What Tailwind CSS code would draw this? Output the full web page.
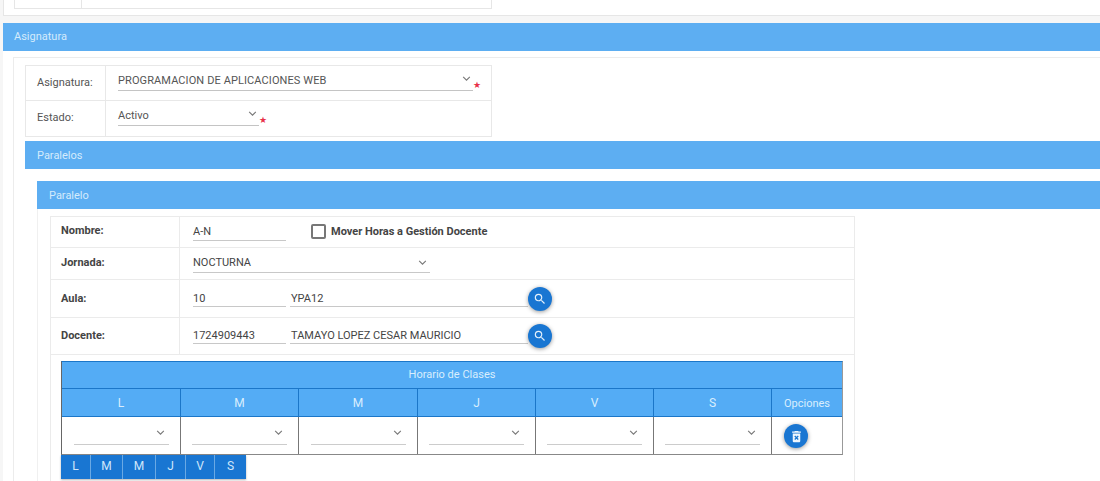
<!DOCTYPE html>
<html lang="es">
<head>
  <meta charset="UTF-8" />
  <title>Asignatura</title>
  <script src="https://cdn.jsdelivr.net/npm/@tailwindcss/browser@4"></script>
</head>
<body class="bg-white font-['Roboto',sans-serif] text-[11px] text-[#555]">
  <div class="w-[1100px] h-[481px] overflow-hidden pl-[3px] bg-[#f6f6f6]">
    <!-- resto del panel anterior -->
    <div class="h-[16px] bg-white border-b border-l border-[#e6e6e6] pl-[10px]">
      <div class="flex w-[478px] h-[9px] border-x border-b border-[#e6e6e6]">
        <div class="w-[67px] border-r border-[#e6e6e6]"></div>
      </div>
    </div>

    <div class="mt-[7px] h-[28px] flex items-center pl-[11px] bg-[#5daef2] text-[#d4ebfc]">Asignatura</div>

    <div class="bg-white pt-[6px] pl-[10px] h-[430px]">
      <div class="border-l border-t border-[#ececec] pt-[7px] pl-[11px] h-[424px]">
        <!-- asignatura / estado -->
        <div class="w-[467px] border border-[#e8e8e8]">
          <div class="flex h-[35px] border-b border-[#e8e8e8]">
            <div class="w-[80px] border-r border-[#e8e8e8] flex items-center pl-[11px]">Asignatura:</div>
            <div class="flex pl-[12px] pt-[4px]">
              <div class="w-[355px] h-[21px] border-b border-[#c4c4c4] flex justify-between pr-[2px]">
                <span class="leading-[22px] tracking-[0.1px]">PROGRAMACION DE APLICACIONES WEB</span>
                <svg class="w-[9px] h-[5px] mt-[6px]" viewBox="0 0 10 6" fill="none" stroke="#777" stroke-width="1.3"><path d="M1 1l4 4 4-4" /></svg>
              </div>
              <span class="text-[#e8314a] text-[9px] mt-[9px]">★</span>
            </div>
          </div>
          <div class="flex h-[35px]">
            <div class="w-[80px] border-r border-[#e8e8e8] flex items-center pl-[11px]">Estado:</div>
            <div class="flex pl-[12px] pt-[4px]">
              <div class="w-[141px] h-[21px] border-b border-[#c4c4c4] flex justify-between pr-[2px]">
                <span class="leading-[22px]">Activo</span>
                <svg class="w-[9px] h-[5px] mt-[6px]" viewBox="0 0 10 6" fill="none" stroke="#777" stroke-width="1.3"><path d="M1 1l4 4 4-4" /></svg>
              </div>
              <span class="text-[#e8314a] text-[9px] mt-[9px]">★</span>
            </div>
          </div>
        </div>

        <div class="mt-[4px] h-[28px] flex items-center pl-[12px] pt-[2px] bg-[#5daef2] text-[#d4ebfc]">Paralelos</div>

        <div class="pt-[12px] pl-[12px]">
          <div class="h-[28px] flex items-center pl-[12px] pt-[2px] bg-[#5daef2] text-[#d4ebfc]">Paralelo</div>

          <div class="pt-[7px] pl-[12px] border-l border-[#f0f0f0]">
            <div class="w-[805px] h-[300px] border border-[#ebebeb] text-[#444]">
              <div class="flex h-[31px] border-b border-[#ebebeb]">
                <div class="w-[129px] border-r border-[#ebebeb] pl-[10px] pt-[6px] font-bold text-[#444]">Nombre:</div>
                <div class="flex pl-[13px] pt-[7px]">
                  <div class="w-[93px] h-[17px] border-b border-[#c8c8c8] leading-[16px]">A-N</div>
                  <div class="flex items-center ml-[25px] h-[15px]">
                    <span class="w-[15px] h-[15px] rounded-[2px] border-2 border-[#777] bg-white"></span>
                    <span class="ml-[5px] pt-[1px] font-bold text-[#444]">Mover Horas a Gestión Docente</span>
                  </div>
                </div>
              </div>
              <div class="flex h-[32px] border-b border-[#ebebeb]">
                <div class="w-[129px] border-r border-[#ebebeb] pl-[10px] pt-[7px] font-bold text-[#444]">Jornada:</div>
                <div class="pl-[13px] pt-[7px]">
                  <div class="w-[237px] h-[18px] border-b border-[#c8c8c8] flex justify-between pr-[3px] leading-[16px]">
                    <span>NOCTURNA</span>
                    <svg class="w-[9px] h-[5px] mt-[5px]" viewBox="0 0 10 6" fill="none" stroke="#777" stroke-width="1.3"><path d="M1 1l4 4 4-4" /></svg>
                  </div>
                </div>
              </div>
              <div class="flex h-[38px] border-b border-[#ebebeb]">
                <div class="w-[129px] border-r border-[#ebebeb] pl-[10px] pt-[11px] font-bold text-[#444]">Aula:</div>
                <div class="flex pl-[13px] pt-[11px]">
                  <div class="w-[93px] h-[16px] border-b border-[#c8c8c8] leading-[16px]">10</div>
                  <div class="w-[238px] h-[16px] ml-[4px] pl-[1px] border-b border-[#c8c8c8] leading-[16px]">YPA12</div>
                  <div class="w-[24px] h-[24px] mt-[-4px] rounded-full bg-[#1976d2] shadow-[0_1px_4px_rgba(0,0,0,0.4)] flex items-center justify-center">
                    <svg class="w-[14px] h-[14px]" viewBox="0 0 24 24" fill="#e3f0fb"><path d="M15.5 14h-.79l-.28-.27A6.47 6.47 0 0 0 16 9.5 6.5 6.5 0 1 0 9.5 16c1.61 0 3.09-.59 4.23-1.57l.27.28v.79l5 4.99L20.49 19l-4.99-5zm-6 0C7.01 14 5 11.99 5 9.5S7.01 5 9.5 5 14 7.01 14 9.5 11.99 14 9.5 14z" /></svg>
                  </div>
                </div>
              </div>
              <div class="flex h-[37px] border-b border-[#ebebeb]">
                <div class="w-[129px] border-r border-[#ebebeb] pl-[10px] pt-[10px] font-bold text-[#444]">Docente:</div>
                <div class="flex pl-[13px] pt-[10px]">
                  <div class="w-[93px] h-[16px] border-b border-[#c8c8c8] leading-[16px]">1724909443</div>
                  <div class="w-[238px] h-[16px] ml-[4px] pl-[1px] border-b border-[#c8c8c8] leading-[16px]">TAMAYO LOPEZ CESAR MAURICIO</div>
                  <div class="w-[24px] h-[24px] mt-[-4px] rounded-full bg-[#1976d2] shadow-[0_1px_4px_rgba(0,0,0,0.4)] flex items-center justify-center">
                    <svg class="w-[14px] h-[14px]" viewBox="0 0 24 24" fill="#e3f0fb"><path d="M15.5 14h-.79l-.28-.27A6.47 6.47 0 0 0 16 9.5 6.5 6.5 0 1 0 9.5 16c1.61 0 3.09-.59 4.23-1.57l.27.28v.79l5 4.99L20.49 19l-4.99-5zm-6 0C7.01 14 5 11.99 5 9.5S7.01 5 9.5 5 14 7.01 14 9.5 11.99 14 9.5 14z" /></svg>
                  </div>
                </div>
              </div>

              <!-- horario -->
              <div class="pl-[10px] pt-[6px]">
                <div class="w-[782px] border border-[#1b76c8] border-b-[#888] border-r-[#999] border-l-[#666]">
                  <div class="h-[27px] bg-[#54acf5] border-b border-[#1b76c8] text-center leading-[26px] text-[#d9eefd]">Horario de Clases</div>
                  <div class="grid grid-cols-[119px_118px_119px_118px_118px_118px_70px] h-[28px] bg-[#54acf5] border-b border-[#1b76c8] text-[#d9eefd] text-center leading-[29px]">
                    <div class="border-r border-[#1b76c8] text-[12px]">L</div>
                    <div class="border-r border-[#1b76c8] text-[12px]">M</div>
                    <div class="border-r border-[#1b76c8] text-[12px]">M</div>
                    <div class="border-r border-[#1b76c8] text-[12px]">J</div>
                    <div class="border-r border-[#1b76c8] text-[12px]">V</div>
                    <div class="border-r border-[#1b76c8] text-[12px]">S</div>
                    <div>Opciones</div>
                  </div>
                  <div class="grid grid-cols-[119px_118px_119px_118px_118px_118px_70px] h-[37px] bg-white">
                    <div class="border-r border-[#777] pl-[12px] pt-[11px]">
                      <div class="w-[95px] h-[17px] border-b border-[#ccc] flex justify-end pr-[4px]">
                        <svg class="w-[9px] h-[5px] mt-[2px]" viewBox="0 0 10 6" fill="none" stroke="#777" stroke-width="1.3"><path d="M1 1l4 4 4-4" /></svg>
                      </div>
                    </div>
                    <div class="border-r border-[#777] pl-[11px] pt-[11px]">
                      <div class="w-[95px] h-[17px] border-b border-[#ccc] flex justify-end pr-[4px]">
                        <svg class="w-[9px] h-[5px] mt-[2px]" viewBox="0 0 10 6" fill="none" stroke="#777" stroke-width="1.3"><path d="M1 1l4 4 4-4" /></svg>
                      </div>
                    </div>
                    <div class="border-r border-[#777] pl-[12px] pt-[11px]">
                      <div class="w-[95px] h-[17px] border-b border-[#ccc] flex justify-end pr-[4px]">
                        <svg class="w-[9px] h-[5px] mt-[2px]" viewBox="0 0 10 6" fill="none" stroke="#777" stroke-width="1.3"><path d="M1 1l4 4 4-4" /></svg>
                      </div>
                    </div>
                    <div class="border-r border-[#777] pl-[11px] pt-[11px]">
                      <div class="w-[95px] h-[17px] border-b border-[#ccc] flex justify-end pr-[4px]">
                        <svg class="w-[9px] h-[5px] mt-[2px]" viewBox="0 0 10 6" fill="none" stroke="#777" stroke-width="1.3"><path d="M1 1l4 4 4-4" /></svg>
                      </div>
                    </div>
                    <div class="border-r border-[#777] pl-[11px] pt-[11px]">
                      <div class="w-[95px] h-[17px] border-b border-[#ccc] flex justify-end pr-[4px]">
                        <svg class="w-[9px] h-[5px] mt-[2px]" viewBox="0 0 10 6" fill="none" stroke="#777" stroke-width="1.3"><path d="M1 1l4 4 4-4" /></svg>
                      </div>
                    </div>
                    <div class="border-r border-[#777] pl-[11px] pt-[11px]">
                      <div class="w-[95px] h-[17px] border-b border-[#ccc] flex justify-end pr-[4px]">
                        <svg class="w-[9px] h-[5px] mt-[2px]" viewBox="0 0 10 6" fill="none" stroke="#777" stroke-width="1.3"><path d="M1 1l4 4 4-4" /></svg>
                      </div>
                    </div>
                    <div class="pl-[12px] pt-[7px]">
                      <div class="w-[24px] h-[24px] rounded-full bg-[#1976d2] shadow-[0_1px_4px_rgba(0,0,0,0.4)] flex items-center justify-center">
                        <svg class="w-[15px] h-[15px]" viewBox="0 0 24 24" fill="#eef6fd"><path d="M6 19c0 1.1.9 2 2 2h8c1.1 0 2-.9 2-2V7H6v12zm2.46-7.12 1.41-1.41L12 12.59l2.12-2.12 1.41 1.41L13.41 14l2.12 2.12-1.41 1.41L12 15.41l-2.12 2.12-1.41-1.41L10.59 14l-2.13-2.12zM15.5 4l-1-1h-5l-1 1H5v2h14V4z" /></svg>
                      </div>
                    </div>
                  </div>
                </div>
                <div class="flex w-[185px] h-[24px] bg-[#1976d2] text-[#cfe6fa] text-[12px] leading-[22px] text-center shadow-[0_1px_2px_rgba(0,0,0,0.3)]">
                  <div class="w-[30px] border-r border-[#6aa9e4]">L</div>
                  <div class="w-[32px] border-r border-[#6aa9e4]">M</div>
                  <div class="w-[33px] border-r border-[#6aa9e4]">M</div>
                  <div class="w-[30px] border-r border-[#6aa9e4]">J</div>
                  <div class="w-[29px] border-r border-[#6aa9e4]">V</div>
                  <div class="w-[31px]">S</div>
                </div>
              </div>
            </div>
          </div>
        </div>
      </div>
    </div>
  </div>
</body>
</html>
